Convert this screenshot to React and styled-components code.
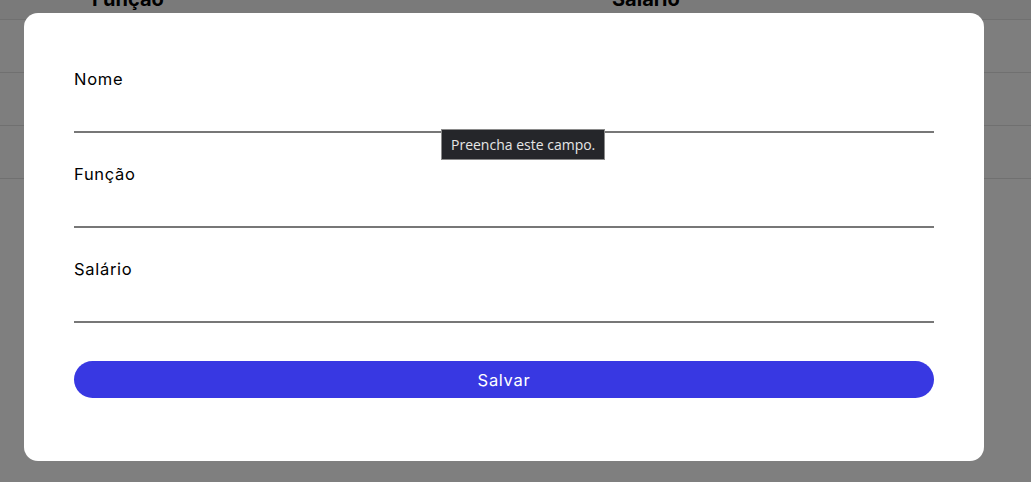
import styled, { createGlobalStyle } from 'styled-components';

const GlobalStyle = createGlobalStyle`
	* {
		box-sizing: border-box;
	}

	body {
		margin: 0;
		font-family: 'Inter', 'Liberation Sans', sans-serif;
		background: #ffffff;
		overflow: hidden;
	}
`;

const headers = ['Função', 'Salário'];
const rows = [1, 2, 3];
const fields = ['Nome', 'Função', 'Salário'];

function App() {
	return (
		<>
			<GlobalStyle />
			<Page>
				<Table>
					<HeadRow>
						{headers.map((h) => (
							<HeadCell key={h}>{h}</HeadCell>
						))}
					</HeadRow>
					{rows.map((r) => (
						<Row key={r} />
					))}
				</Table>
			</Page>
			<Overlay>
				<Modal>
					<Form onSubmit={(e) => e.preventDefault()}>
						{fields.map((f, i) => (
							<Field key={f}>
								<Label htmlFor={`campo-${i}`}>{f}</Label>
								<Input id={`campo-${i}`} type="text" />
								{i === 0 && <Tooltip>Preencha este campo.</Tooltip>}
							</Field>
						))}
						<SaveButton type="submit">Salvar</SaveButton>
					</Form>
				</Modal>
			</Overlay>
		</>
	);
}

export default App;

const Page = styled.main`
	height: 482px;
	overflow: hidden;
`;

const Table = styled.div`
	margin-top: -22px;
	width: 100%;
`;

const HeadRow = styled.div`
	display: grid;
	grid-template-columns: 520px 1fr;
	padding-left: 92px;
	height: 42px;
	align-items: center;
	background: #f4f4f4;
	border-bottom: 1px solid #e0e0e0;
`;

const HeadCell = styled.div`
	font-family: 'Inter', sans-serif;
	font-weight: 700;
	font-size: 20px;
	color: #000;
`;

const Row = styled.div`
	height: 53px;
	background: #fcfcfc;
	border-bottom: 1px solid #e0e0e0;
`;

const Overlay = styled.div`
	position: fixed;
	inset: 0;
	background: rgba(0, 0, 0, 0.5);
	display: flex;
	justify-content: center;
	padding-top: 13px;
	padding-right: 47px;
	padding-left: 24px;
`;

const Modal = styled.div`
	width: 960px;
	height: 448px;
	background: #fff;
	border-radius: 14px;
	padding: 54px 50px 62px;
`;

const Form = styled.form`
	display: flex;
	flex-direction: column;
`;

const Field = styled.div`
	position: relative;
	display: flex;
	flex-direction: column;
	margin-bottom: 29px;

	&:nth-of-type(3) {
		margin-bottom: 38px;
	}
`;

const Label = styled.label`
	font-size: 16.5px;
	line-height: 24px;
	color: #000;
	letter-spacing: 0.7px;
`;

const Input = styled.input`
	height: 42px;
	border: none;
	border-bottom: 2px solid #777;
	outline: none;
	font-family: inherit;
	font-size: 16px;
	background: transparent;
`;

const Tooltip = styled.div`
	position: absolute;
	left: 367px;
	top: 62px;
	height: 31px;
	padding: 0 9px;
	display: flex;
	align-items: center;
	background: #25262a;
	border: 1px solid #8a8a8a;
	color: #e6e6e6;
	font-family: 'Open Sans', 'Liberation Sans', sans-serif;
	font-size: 14px;
	white-space: nowrap;
`;

const SaveButton = styled.button`
	height: 37px;
	border: none;
	border-radius: 19px;
	background: #3838e2;
	color: #fff;
	font-family: 'Inter', sans-serif;
	font-size: 16.5px;
	letter-spacing: 0.7px;
	cursor: pointer;
`;
